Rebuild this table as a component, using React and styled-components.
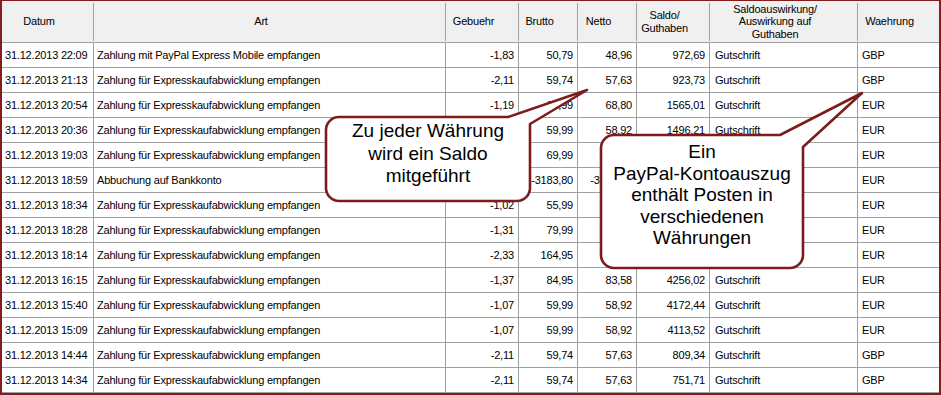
import React from "react";
import styled, { createGlobalStyle } from "styled-components";

const GlobalStyle = createGlobalStyle`
  html, body { margin: 0; padding: 0; background: #ffffff; }
  body { font-family: "Liberation Sans", Arial, sans-serif; }
  * { box-sizing: border-box; }
`;

const FRAME = "#861c1c";
const GRID = "#a0a0a0";

const columns = [
  { key: "datum", label: "Datum", w: 92, align: "left", pad: "3px" },
  { key: "art", label: "Art", w: 352, align: "left", pad: "3px" },
  { key: "gebuehr", label: "Gebuehr", w: 73, align: "right" },
  { key: "brutto", label: "Brutto", w: 59, align: "right" },
  { key: "netto", label: "Netto", w: 59, align: "right" },
  { key: "saldo", label: "Saldo/\nGuthaben", w: 73, align: "right" },
  { key: "ausw", label: "Saldoauswirkung/\nAuswirkung auf\nGuthaben", w: 148, align: "left", pad: "5px" },
  { key: "waehrung", label: "Waehrung", w: 81, align: "left", pad: "4px", last: true },
];

const E = "Zahlung für Expresskaufabwicklung empfangen";
/* cells that lie fully under a callout are left empty */
const rows = [
  ["31.12.2013 22:09", "Zahlung mit PayPal Express Mobile empfangen", "-1,83", "50,79", "48,96", "972,69", "Gutschrift", "GBP"],
  ["31.12.2013 21:13", E, "-2,11", "59,74", "57,63", "923,73", "Gutschrift", "GBP"],
  ["31.12.2013 20:54", E, "-1,19", "69,99", "68,80", "1565,01", "Gutschrift", "EUR"],
  ["31.12.2013 20:36", E, "", "59,99", "58,92", "1496,21", "Gutschrift", "EUR"],
  ["31.12.2013 19:03", E, "", "69,99", "", "", "", "EUR"],
  ["31.12.2013 18:59", "Abbuchung auf Bankkonto", "", "-3183,80", "-3183,80", "", "", "EUR"],
  ["31.12.2013 18:34", E, "-1,02", "55,99", "", "", "", "EUR"],
  ["31.12.2013 18:28", E, "-1,31", "79,99", "", "", "", "EUR"],
  ["31.12.2013 18:14", E, "-2,33", "164,95", "", "", "", "EUR"],
  ["31.12.2013 16:15", E, "-1,37", "84,95", "83,58", "4256,02", "Gutschrift", "EUR"],
  ["31.12.2013 15:40", E, "-1,07", "59,99", "58,92", "4172,44", "Gutschrift", "EUR"],
  ["31.12.2013 15:09", E, "-1,07", "59,99", "58,92", "4113,52", "Gutschrift", "EUR"],
  ["31.12.2013 14:44", E, "-2,11", "59,74", "57,63", "809,34", "Gutschrift", "GBP"],
  ["31.12.2013 14:34", E, "-2,11", "59,74", "57,63", "751,71", "Gutschrift", "GBP"],
];

const Page = styled.div`
  position: relative;
  width: 941px;
  height: 395px;
  overflow: hidden;
`;

const Frame = styled.div`
  width: 941px;
  height: 395px;
  border-top: 1px solid ${FRAME};
  border-left: 2px solid ${FRAME};
  border-right: 2px solid ${FRAME};
  border-bottom: 2px solid ${FRAME};
  background: #ffffff;
  overflow: hidden;
`;

const Grid = styled.div`
  display: grid;
  grid-template-columns: ${columns.map((c) => c.w + "px").join(" ")};
  grid-template-rows: 42px;
  grid-auto-rows: 25px;
  font-size: 11px;
  letter-spacing: -0.2px;
  color: #000000;
`;

const HeadCell = styled.div`
  position: relative;
  background: #f0f0f0;
  border-bottom: 1px solid ${GRID};
  display: flex;
  align-items: center;
  justify-content: center;
  padding-right: 18px;
  text-align: center;
  white-space: pre-line;
  line-height: 12.5px;
  &::after {
    content: "";
    display: ${(p) => (p.$last ? "none" : "block")};
    position: absolute;
    right: 0;
    top: 2px;
    bottom: 1px;
    width: 1px;
    background: ${GRID};
  }
`;

const Cell = styled.div`
  border-bottom: 1px solid ${GRID};
  border-right: ${(p) => (p.$last ? "none" : `1px solid ${GRID}`)};
  display: flex;
  align-items: center;
  justify-content: ${(p) => (p.$align === "right" ? "flex-end" : "flex-start")};
  padding: 0 ${(p) => (p.$align === "right" ? "4px" : "0")} 0 ${(p) => p.$pad || "0"};
  white-space: nowrap;
  overflow: hidden;
`;

const CalloutWrap = styled.div`
  position: absolute;
  pointer-events: none;
`;

const CalloutSvg = styled.svg`
  position: absolute;
  left: 0;
  top: 0;
  overflow: visible;
`;

const CalloutText = styled.div`
  position: absolute;
  display: flex;
  flex-direction: column;
  align-items: center;
  font-family: "Liberation Sans", Arial, sans-serif;
  font-size: 19px;
  line-height: ${(p) => p.$lh}px;
  color: #000000;
  text-align: center;
  padding-top: ${(p) => p.$pt}px;
`;

function Callout({ box, tip, baseX, rightY, lines, lh, pt }) {
  const [x0, y0, x1, y1] = box;
  const r = 13;
  const L = x0 - 3;
  const T = tip[1] - 3;
  const W = tip[0] - x0 + 6;
  const H = y1 - tip[1] + 6;
  const d = `M ${x0 + r} ${y0} H ${baseX} L ${tip[0]} ${tip[1]} L ${x1} ${rightY} V ${y1 - r} A ${r} ${r} 0 0 1 ${x1 - r} ${y1} H ${x0 + r} A ${r} ${r} 0 0 1 ${x0} ${y1 - r} V ${y0 + r} A ${r} ${r} 0 0 1 ${x0 + r} ${y0} Z`;
  return (
    <CalloutWrap style={{ left: L, top: T, width: W, height: H }}>
      <CalloutSvg width={W} height={H} viewBox={`${L} ${T} ${W} ${H}`}>
        <path d={d} fill="#ffffff" stroke="#7d1c1c" strokeWidth="2.6" strokeLinejoin="round" />
      </CalloutSvg>
      <CalloutText
        $lh={lh}
        $pt={pt}
        style={{ left: x0 - L, top: y0 - T, width: x1 - x0, height: y1 - y0 }}
      >
        {lines.map((l) => (
          <span key={l}>{l}</span>
        ))}
      </CalloutText>
    </CalloutWrap>
  );
}

export default function App() {
  return (
    <>
      <GlobalStyle />
      <Page>
        <Frame>
          <Grid>
            {columns.map((c) => (
              <HeadCell key={c.key} $last={c.last}>
                {c.label}
              </HeadCell>
            ))}
            {rows.map((row, ri) =>
              row.map((v, ci) => (
                <Cell
                  key={ri + "-" + ci}
                  $align={columns[ci].align}
                  $pad={columns[ci].pad}
                  $last={columns[ci].last}
                >
                  {v}
                </Cell>
              ))
            )}
          </Grid>
        </Frame>
        <Callout
          box={[326, 117, 530, 201]}
          tip={[587, 90]}
          baseX={508}
          rightY={124}
          lines={["Zu jeder Währung", "wird ein Saldo", "mitgeführt"]}
          lh={22.5}
          pt={3}
        />
        <Callout
          box={[601, 135, 803, 268]}
          tip={[862, 93]}
          baseX={780}
          rightY={147}
          lines={["Ein", "PayPal-Kontoauszug", "enthält Posten in", "verschiedenen", "Währungen"]}
          lh={21.6}
          pt={6}
        />
      </Page>
    </>
  );
}
